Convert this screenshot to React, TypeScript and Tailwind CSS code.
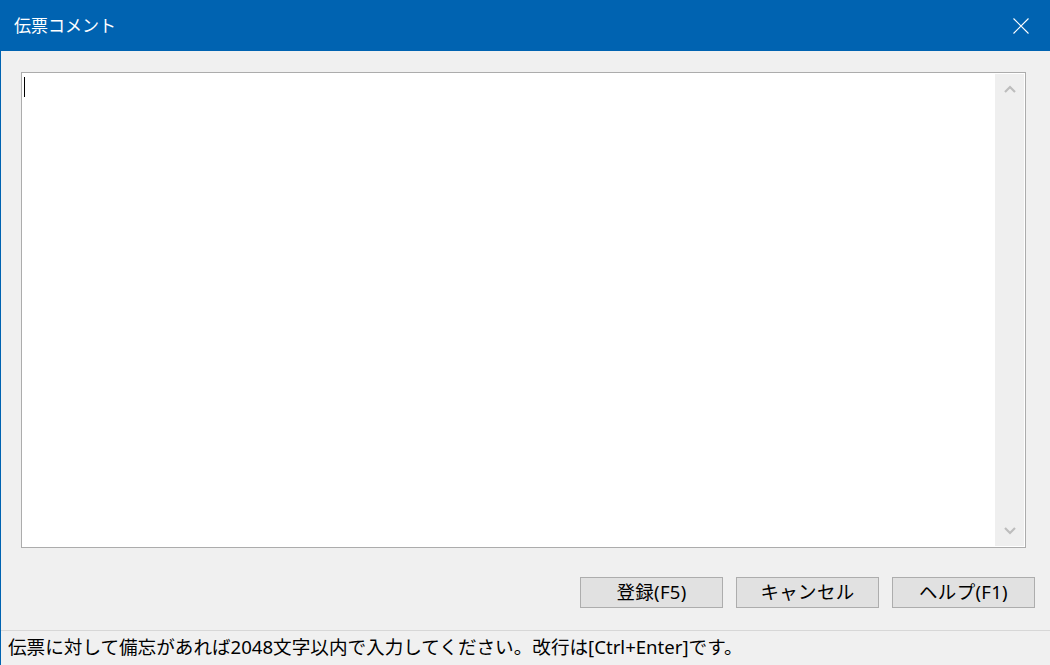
import React from "react";

const font = { fontFamily: '"Noto Sans CJK JP", "Noto Sans", sans-serif' };
const mixed = { fontFamily: '"Noto Sans", "Noto Sans CJK JP", sans-serif' };

export default function App() {
    const buttons = ["登録(F5)", "キャンセル", "ヘルプ(F1)"];
    return (
        <div className="w-[1050px] h-[665px] flex flex-col bg-[#f0f0f0] overflow-hidden" style={font}>
            {/* タイトルバー */}
            <div className="h-[51px] shrink-0 bg-[#0063b1] flex items-center justify-between pl-[14px] pr-[20px] text-white">
                <span className="text-[17px] leading-none pb-[2px]">伝票コメント</span>
                <svg width="16" height="16" viewBox="0 0 16 16" className="mr-[1px]">
                    <path d="M0.5 0.5 L15.5 15.5 M15.5 0.5 L0.5 15.5" stroke="white" strokeWidth="1.1" fill="none"/>
                </svg>
            </div>
            <div className="flex-1 flex flex-col border-l border-[#0063b1]">
                {/* コメント入力欄 */}
                <div className="mt-[21px] ml-[20px] w-[1005px] h-[476px] border border-[#acacac] bg-white flex">
                    <div className="flex-1 pt-[4px] pl-[2px]">
                        <div className="w-px h-[20px] bg-black"/>
                    </div>
                    <div className="w-[29px] my-[1px] mr-[1px] bg-[#efefef] flex flex-col justify-between items-center py-[11px]">
                        <svg width="12" height="8" viewBox="0 0 12 8">
                            <path d="M1 7 L6 2 L11 7" stroke="#bdbdbd" strokeWidth="2.2" fill="none"/>
                        </svg>
                        <svg width="12" height="8" viewBox="0 0 12 8">
                            <path d="M1 1 L6 6 L11 1" stroke="#bdbdbd" strokeWidth="2.2" fill="none"/>
                        </svg>
                    </div>
                </div>
                {/* ボタン */}
                <div className="mt-[29px] flex justify-end gap-[13px] pr-[15px]">
                    {buttons.map((b) => (
                        <div key={b} style={mixed}
                             className="w-[143px] h-[31px] border border-[#adadad] bg-[#e1e1e1] flex items-center justify-center text-[18.5px] tracking-[0.3px] text-black leading-none">
                            {b}
                        </div>
                    ))}
                </div>
                {/* ステータスバー */}
                <div className="mt-[22px] border-t border-[#d7d7d7] flex-1 flex items-center pl-[7px] pb-[2px]">
                    <span style={mixed} className="text-[18.6px] text-black leading-none">
                        伝票に対して備忘があれば2048文字以内で入力してください。改行は[Ctrl+Enter]です。
                    </span>
                </div>
            </div>
        </div>
    );
}
